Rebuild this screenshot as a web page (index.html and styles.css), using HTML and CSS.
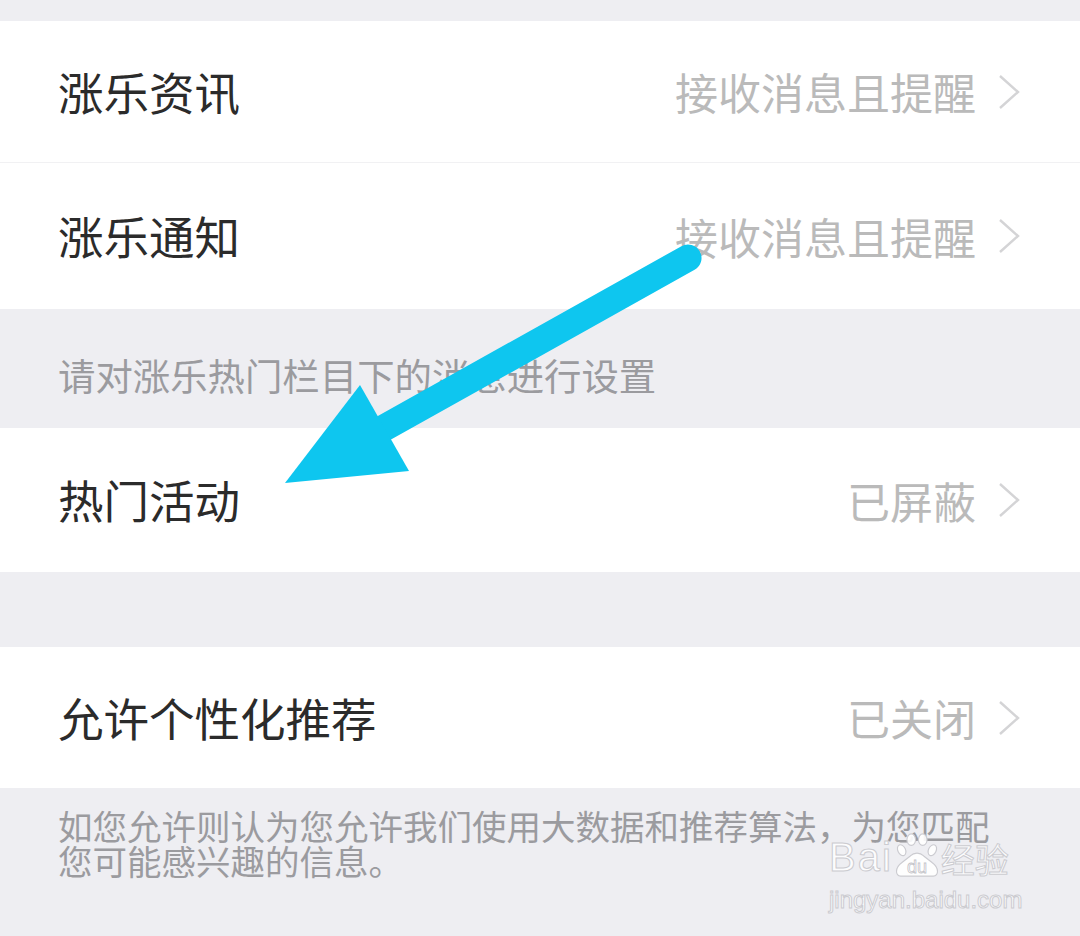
FILE: index.html
```html
<!DOCTYPE html>
<html lang="zh-CN">
<head>
<meta charset="UTF-8" />
<title>消息设置</title>
<link rel="stylesheet" href="styles.css">
</head>
<body>
<div class="page">
  <div class="gap gap-top"></div>

  <div class="group">
    <div class="row row-news">
      <span class="label">涨乐资讯</span>
      <span class="value">接收消息且提醒
        <svg class="chevron" viewBox="0 0 22 36"><polyline points="2,2 20,18 2,34" /></svg>
      </span>
    </div>
    <div class="row row-notice">
      <span class="label">涨乐通知</span>
      <span class="value">接收消息且提醒
        <svg class="chevron" viewBox="0 0 22 36"><polyline points="2,2 20,18 2,34" /></svg>
      </span>
    </div>
  </div>

  <p class="note note-hot">请对涨乐热门栏目下的消息进行设置</p>

  <div class="row row-hot">
    <span class="label">热门活动</span>
    <span class="value">已屏蔽
      <svg class="chevron" viewBox="0 0 22 36"><polyline points="2,2 20,18 2,34" /></svg>
    </span>
  </div>

  <div class="gap gap-mid"></div>

  <div class="row row-rec">
    <span class="label">允许个性化推荐</span>
    <span class="value">已关闭
      <svg class="chevron" viewBox="0 0 22 36"><polyline points="2,2 20,18 2,34" /></svg>
    </span>
  </div>

  <p class="note note-rec">如您允许则认为您允许我们使用大数据和推荐算法，为您匹配您可能感兴趣的信息。</p>

  <!-- annotation arrow drawn over the screenshot -->
  <svg class="arrow" viewBox="0 0 1080 936">
    <line x1="688" y1="258" x2="384" y2="428" />
    <polygon points="360,385 409,471 285,483" />
  </svg>

  <div class="watermark">
    <div class="wm-logo">
      <span class="wm-bai">Bai</span>
      <svg class="wm-paw" viewBox="0 0 48 48">
        <ellipse cx="8" cy="19" rx="4" ry="6" transform="rotate(-25 8 19)" />
        <ellipse cx="18" cy="8" rx="4.5" ry="6" />
        <ellipse cx="30" cy="8" rx="4.5" ry="6" />
        <ellipse cx="40" cy="19" rx="4" ry="6" transform="rotate(25 40 19)" />
        <path d="M7 46 C1 46 1 37 8 32 L17 25 C21 21 27 21 31 25 L40 32 C47 37 47 46 41 46 Z" />
        <text x="24" y="43" text-anchor="middle">du</text>
      </svg>
      <span class="wm-cn">经验</span>
    </div>
    <div class="wm-url">jingyan.baidu.com</div>
  </div>
</div>
</body>
</html>
```

FILE: styles.css
```css
body {
  margin: 0;
  background: #eeeef2;
  font-family: "Noto Sans CJK SC", "Noto Sans", sans-serif;
}
.page {
  position: relative;
  width: 1080px;
  height: 936px;
  overflow: hidden;
}
.gap-top {
  height: 21px;
}
.gap-mid {
  height: 75px;
}
.row {
  display: flex;
  align-items: center;
  justify-content: space-between;
  background: #fff;
  padding: 0 60px 0 58px;
  box-sizing: border-box;
}
.row-news {
  height: 142px;
  border-bottom: 1px solid #f1f1f3;
}
.row-notice {
  height: 146px;
}
.row-hot {
  height: 144px;
}
.row-rec {
  height: 141px;
}
.label {
  font-size: 45.5px;
  color: #2b2b2b;
  line-height: 1;
}
.value {
  display: flex;
  align-items: center;
  gap: 22px;
  font-size: 43px;
  color: #bababa;
  line-height: 1;
}
.chevron {
  width: 22px;
  height: 36px;
  fill: none;
  stroke: #d4d4d6;
  stroke-width: 2.4;
}
.note {
  margin: 0;
  box-sizing: border-box;
  color: #9b9b9f;
}
.note-hot {
  height: 119px;
  padding: 46px 40px 0 58px;
  font-size: 37.4px;
  line-height: 40px;
}
.note-rec {
  height: 148px;
  padding: 20px 82px 0 58px;
  font-size: 34.5px;
  line-height: 35px;
}
.arrow {
  position: absolute;
  left: 0;
  top: 0;
  width: 1080px;
  height: 936px;
  pointer-events: none;
}
.arrow line {
  stroke: #0ec6ef;
  stroke-width: 27;
  stroke-linecap: round;
}
.arrow polygon {
  fill: #0ec6ef;
}
.watermark {
  position: absolute;
  left: 829px;
  top: 830px;
  color: rgba(255, 255, 255, 0.9);
  -webkit-text-stroke: 1px #cbcbd0;
}
.wm-logo {
  display: flex;
  align-items: flex-end;
  gap: 1px;
  height: 48px;
}
.wm-bai {
  font-family: "Liberation Sans", sans-serif;
  font-size: 40px;
  letter-spacing: 2px;
  line-height: 1;
  margin-bottom: 1px;
}
.wm-paw {
  width: 46px;
  height: 46px;
}
.wm-paw ellipse,
.wm-paw path {
  fill: rgba(255, 255, 255, 0.9);
  stroke: #cbcbd0;
  stroke-width: 1.2;
}
.wm-paw text {
  font-family: "Liberation Sans", sans-serif;
  font-size: 19px;
  fill: #fff;
  stroke: #c4c4c9;
  stroke-width: 0.8;
}
.wm-cn {
  font-size: 34px;
  line-height: 1;
  margin-bottom: 2px;
}
.wm-url {
  font-family: "Liberation Sans", sans-serif;
  font-size: 24px;
  margin-top: 8px;
}
```
